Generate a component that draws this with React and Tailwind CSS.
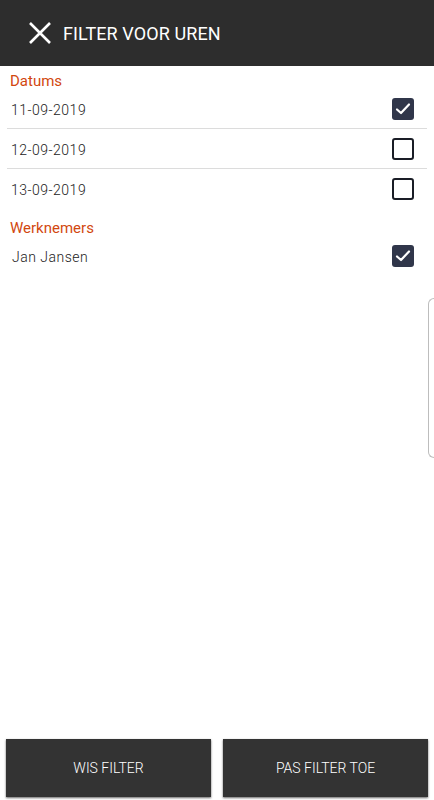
import React, { useState } from 'react';

const dates = [
  { label: '11-09-2019', checked: true },
  { label: '12-09-2019', checked: false },
  { label: '13-09-2019', checked: false },
];

const Checkbox = ({ checked, onClick }) => (
  <button
    onClick={onClick}
    className={`w-[22px] h-[22px] rounded-[3px] flex items-center justify-center ${
      checked ? 'bg-[#30364a]' : 'border-2 border-[#1a1d26] bg-white'
    }`}
  >
    {checked && (
      <svg width="18" height="18" viewBox="0 0 18 18" fill="none">
        <path d="M3 9.5 L7 13 L15 4.5" stroke="white" strokeWidth="2.2" strokeLinecap="round" strokeLinejoin="round" />
      </svg>
    )}
  </button>
);

const App = () => {
  const [checkedDates, setCheckedDates] = useState(dates.map((d) => d.checked));
  const [janChecked, setJanChecked] = useState(true);

  const toggleDate = (idx) => {
    setCheckedDates((prev) => prev.map((v, i) => (i === idx ? !v : v)));
  };

  return (
    <div className="relative w-[434px] h-[800px] bg-white flex flex-col overflow-hidden font-['Roboto',sans-serif]">
      {/* Header */}
      <div className="h-[66px] bg-[#2d2d2d] flex items-center pl-[28px] shrink-0">
        <svg width="24" height="24" viewBox="0 0 24 24" fill="none">
          <path d="M2 2 L22 22 M22 2 L2 22" stroke="white" strokeWidth="2.6" />
        </svg>
        <span className="ml-[11px] text-white text-[18px] tracking-[0.1px]">FILTER VOOR UREN</span>
      </div>

      {/* Content */}
      <div className="flex-1 px-[7px]">
        {/* Datums */}
        <div className="pl-[3px] pt-[7px] text-[15px] leading-[16px] text-[#d2480f]">Datums</div>
        <div>
          {checkedDates.map((checked, idx) => (
            <div
              key={idx}
              className={`h-[40px] flex items-center justify-between pl-[4px] pr-[13px] ${
                idx < checkedDates.length - 1 ? 'border-b border-[#dcdcdc]' : ''
              }`}
            >
              <span className="pt-[3px] text-[14px] font-light text-[#222] tracking-[0.5px]">{dates[idx].label}</span>
              <Checkbox checked={checked} onClick={() => toggleDate(idx)} />
            </div>
          ))}
        </div>

        {/* Werknemers */}
        <div className="pl-[3px] pt-[11px] text-[15px] leading-[16px] text-[#d2480f]">Werknemers</div>
        <div className="h-[40px] flex items-center justify-between pl-[5px] pr-[13px]">
          <span className="pt-[3px] text-[14px] font-light text-[#222] tracking-[0.5px]">Jan Jansen</span>
          <Checkbox checked={janChecked} onClick={() => setJanChecked(!janChecked)} />
        </div>
      </div>

      {/* Bottom buttons */}
      <div className="flex gap-[12px] px-[6px] pb-[3px] shrink-0">
        <button className="flex-1 h-[58px] bg-[#333333] text-white text-[14px] font-light shadow-[0_1px_2px_rgba(0,0,0,0.6)]">
          WIS FILTER
        </button>
        <button className="flex-1 h-[58px] bg-[#333333] text-white text-[14px] font-light shadow-[0_1px_2px_rgba(0,0,0,0.6)]">
          PAS FILTER TOE
        </button>
      </div>

      {/* Edge panel handle */}
      <div className="absolute right-0 top-[298px] w-[6px] h-[160px] border-l border-y border-[#bdbdbd] rounded-l-[6px]" />
    </div>
  );
};

export default App;
